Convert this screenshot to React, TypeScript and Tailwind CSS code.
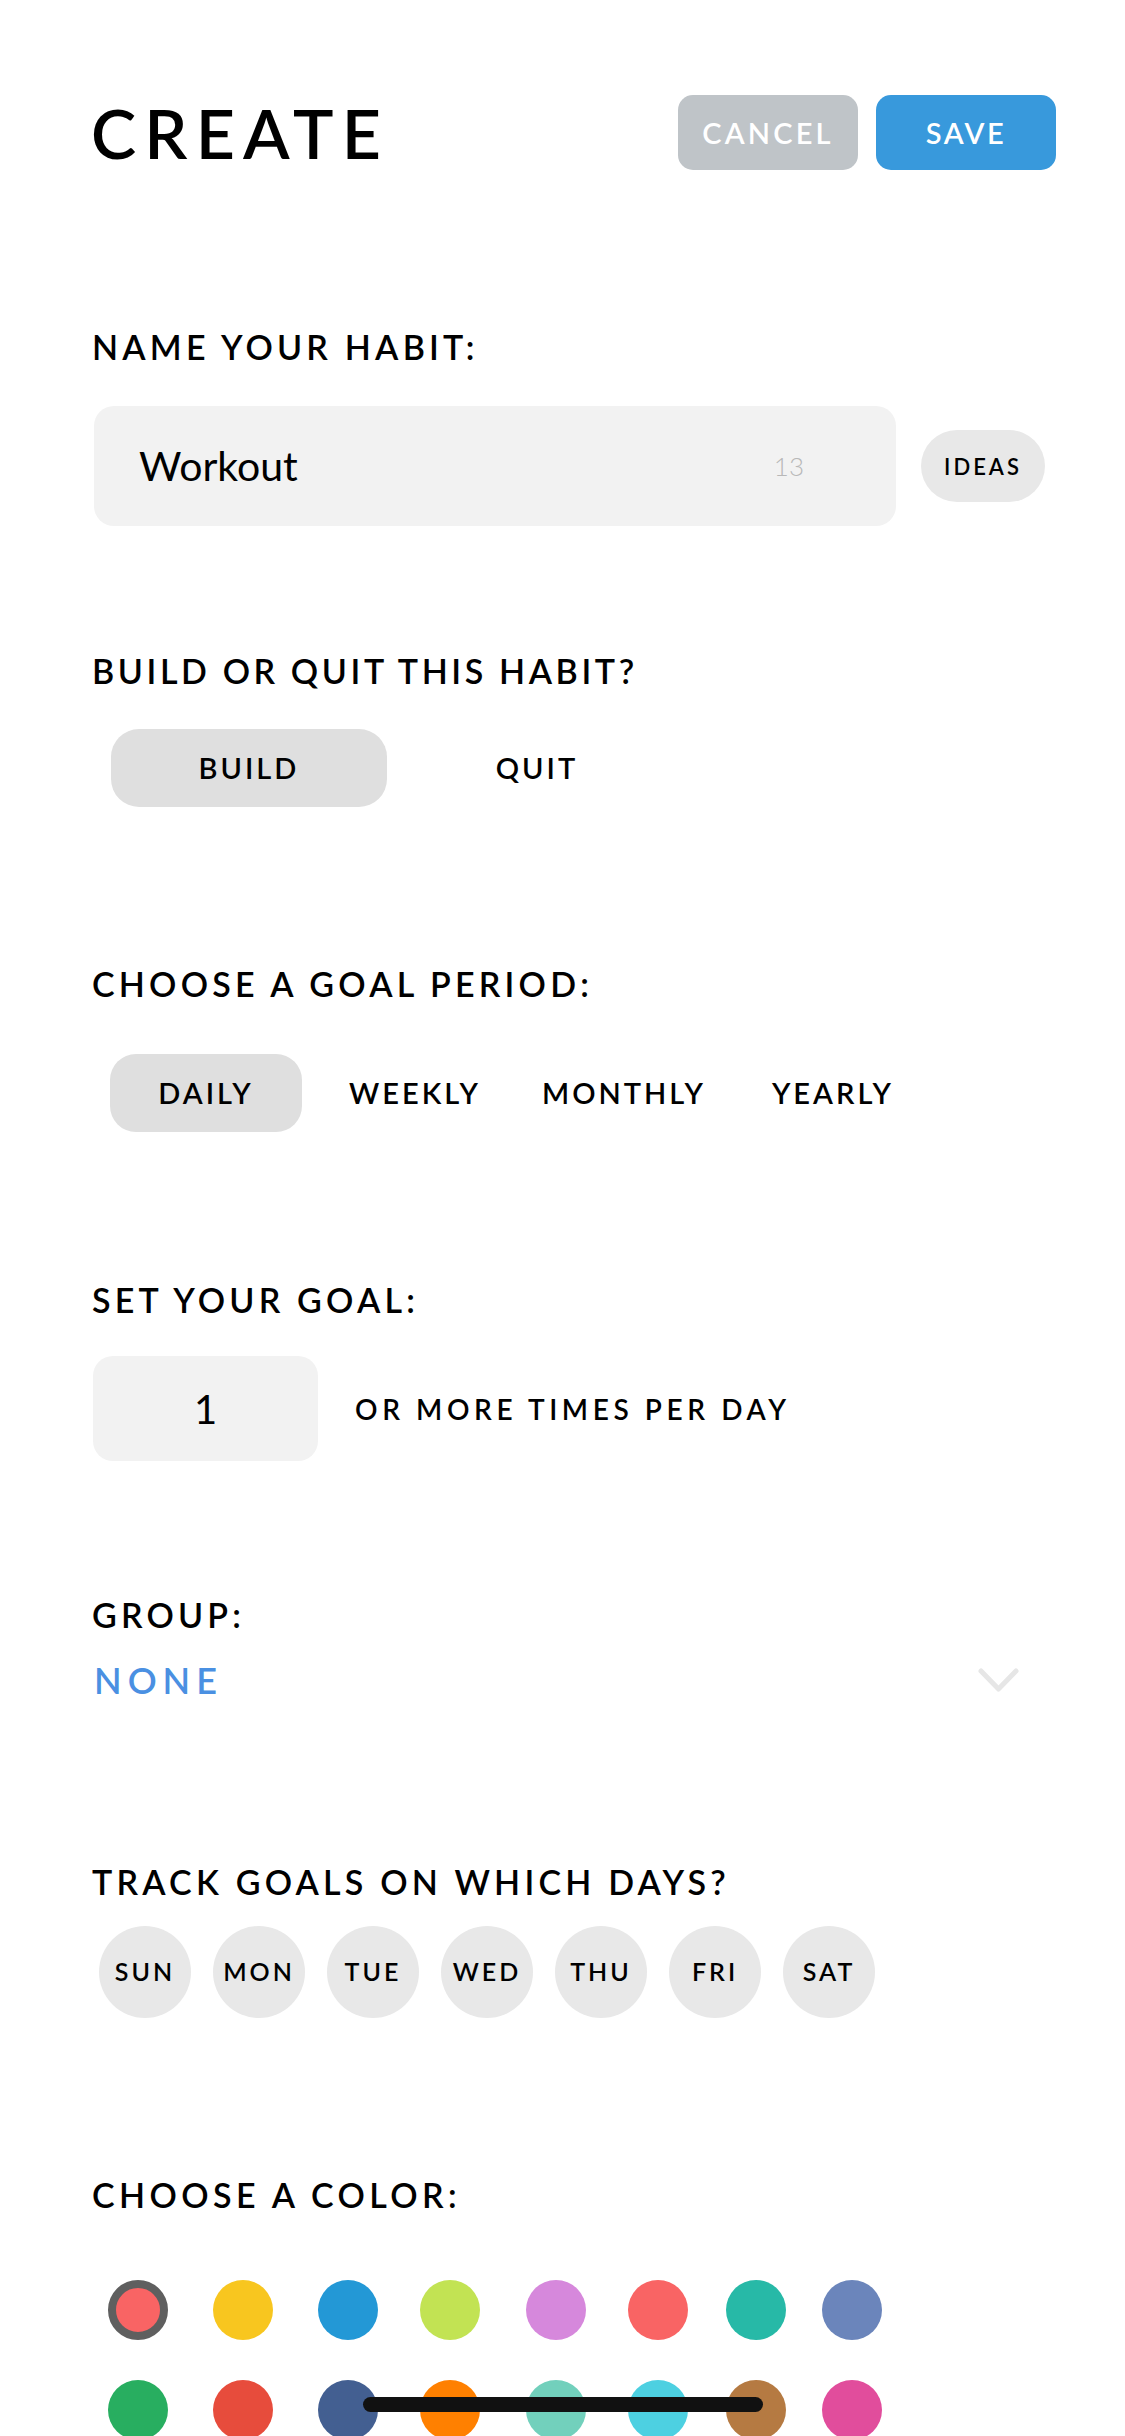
import React from "react";

const days = ["SUN", "MON", "TUE", "WED", "THU", "FRI", "SAT"];

const colorRows = [
  ["#f96464", "#f8c61f", "#2398d6", "#c2e353", "#d688dc", "#f96464", "#27b9a7", "#6b85bb"],
  ["#28ae60", "#e74c3c", "#435f91", "#ff8000", "#72d0bc", "#4dd0e1", "#b57a42", "#e14d9c"],
];

// swatch spacing in the picker isn't perfectly even
const swatchGaps = ["", "ml-[45px]", "ml-[45px]", "ml-[42px]", "ml-[46px]", "ml-[42px]", "ml-[38px]", "ml-[36px]"];

function Label({
  children,
  className = "",
  tracking = "tracking-[4.2px]",
}: {
  children: React.ReactNode;
  className?: string;
  tracking?: string;
}) {
  return (
    <div className={`text-[34px] leading-none font-semibold text-black ${tracking} ${className}`}>
      {children}
    </div>
  );
}

export default function App() {
  return (
    <div
      className="relative h-[2436px] overflow-hidden bg-white pt-[95px]"
      style={{ fontFamily: "Lato, 'Noto Sans', sans-serif" }}
    >
      {/* Header */}
      <div className="flex items-center justify-between pl-[91px] pr-[69px]">
        <h1 className="text-[68px] leading-none font-semibold tracking-[0.12em] text-black">CREATE</h1>
        <div className="flex gap-[18px]">
          <button className="flex h-[75px] w-[180px] items-center justify-center rounded-[15px] bg-[#bfc4c8] text-[29px] font-semibold tracking-[3.2px] text-white">
            CANCEL
          </button>
          <button className="flex h-[75px] w-[180px] items-center justify-center rounded-[15px] bg-[#3899dc] text-[29px] font-semibold tracking-[2.5px] text-white">
            SAVE
          </button>
        </div>
      </div>

      <div className="pl-[92px]">
        {/* Name */}
        <Label className="mt-[160px]">NAME YOUR HABIT:</Label>
        <div className="mt-[42px] flex items-center">
          <div className="ml-[2px] flex h-[120px] w-[802px] items-center justify-between rounded-[20px] bg-[#f2f2f2] pl-[45px] pr-[92px]">
            <span className="text-[41px] text-black">Workout</span>
            <span className="text-[26px] font-light text-[#b8b8b8]">13</span>
          </div>
          <button className="ml-[25px] flex h-[72px] w-[124px] items-center justify-center rounded-full bg-[#e8e8e8] text-[22px] font-semibold tracking-[3px] text-black">
            IDEAS
          </button>
        </div>

        {/* Build or quit */}
        <Label className="mt-[128px]" tracking="tracking-[3.6px]">
          BUILD OR QUIT THIS HABIT?
        </Label>
        <div className="mt-[41px] ml-[19px] flex gap-[12px]">
          <div className="flex h-[78px] w-[276px] items-center justify-center rounded-[28px] bg-[#dfdfdf] text-[29px] font-semibold tracking-[3px]">
            BUILD
          </div>
          <div className="flex h-[78px] w-[276px] items-center justify-center text-[29px] font-semibold tracking-[3px]">
            QUIT
          </div>
        </div>

        {/* Goal period */}
        <Label className="mt-[160px]">CHOOSE A GOAL PERIOD:</Label>
        <div className="mt-[53px] ml-[18px] flex gap-[17px]">
          {["DAILY", "WEEKLY", "MONTHLY", "YEARLY"].map((p, i) => (
            <div
              key={p}
              className={`flex h-[78px] w-[192px] items-center justify-center rounded-[26px] text-[29px] font-semibold tracking-[3px] ${
                i === 0 ? "bg-[#dfdfdf]" : ""
              }`}
            >
              {p}
            </div>
          ))}
        </div>

        {/* Goal */}
        <Label className="mt-[151px]">SET YOUR GOAL:</Label>
        <div className="mt-[39px] flex items-center">
          <div className="ml-[1px] flex h-[105px] w-[225px] items-center justify-center rounded-[20px] bg-[#f2f2f2] text-[40px] text-black">
            1
          </div>
          <span className="ml-[37px] text-[28px] font-semibold tracking-[4.6px]">OR MORE TIMES PER DAY</span>
        </div>

        {/* Group */}
        <Label className="mt-[137px]">GROUP:</Label>
        <div className="mt-[30px] flex items-center justify-between pr-[106px]">
          <span className="ml-[2px] text-[36px] leading-none font-semibold tracking-[6px] text-[#4a90e2]">NONE</span>
          <svg width="41" height="24" viewBox="0 0 41 24" fill="none">
            <path d="M3 3 L20.5 21 L38 3" stroke="#e6e6e6" strokeWidth="5" strokeLinecap="round" strokeLinejoin="round" />
          </svg>
        </div>

        {/* Days */}
        <Label className="mt-[167px]">TRACK GOALS ON WHICH DAYS?</Label>
        <div className="mt-[27px] ml-[7px] flex gap-[22px]">
          {days.map((d) => (
            <div
              key={d}
              className="flex h-[92px] w-[92px] items-center justify-center rounded-full bg-[#e8e8e8] text-[25px] font-semibold tracking-[3px]"
            >
              {d}
            </div>
          ))}
        </div>

        {/* Colors */}
        <Label className="mt-[160px]" tracking="tracking-[4.4px]">
          CHOOSE A COLOR:
        </Label>
        <div className="mt-[68px] ml-[16px] flex flex-col gap-[40px]">
          {colorRows.map((row, r) => (
            <div key={r} className="flex">
              {row.map((c, i) => (
                <div
                  key={i}
                  className={`h-[60px] w-[60px] shrink-0 rounded-full ${swatchGaps[i]} ${
                    r === 0 && i === 0 ? "border-[8px] border-[#5f5f5f]" : ""
                  }`}
                  style={{ backgroundColor: c }}
                />
              ))}
            </div>
          ))}
        </div>
      </div>

      {/* Home indicator */}
      <div className="absolute bottom-[24px] left-[363px] h-[15px] w-[400px] rounded-full bg-[#111]" />
    </div>
  );
}
